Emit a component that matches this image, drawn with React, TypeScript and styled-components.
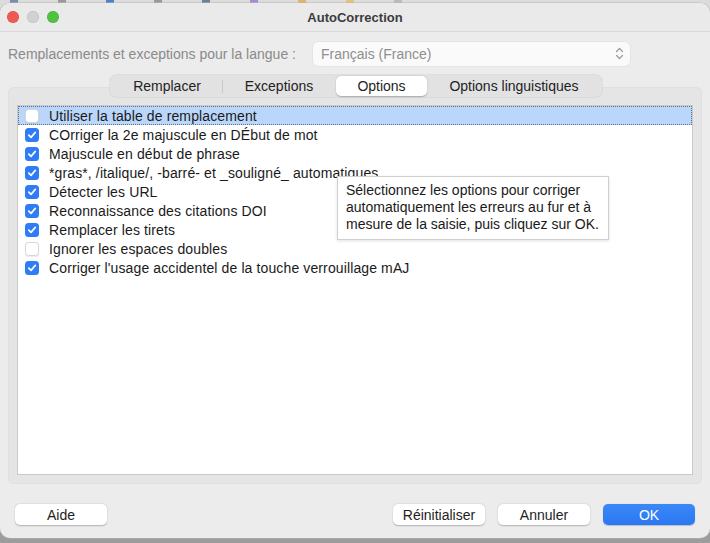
import React from "react";
import styled, { createGlobalStyle } from "styled-components";

const Global = createGlobalStyle`
  html, body { margin: 0; padding: 0; }
  body {
    width: 710px; height: 543px; overflow: hidden;
    background: #a9a9a9;
    font-family: "Liberation Sans", Arial, sans-serif;
  }
  #root { height: 543px; }
`;

const Desktop = styled.div`
  height: 543px;
  display: flex;
  flex-direction: column;
  background: linear-gradient(#dcdcdc 0, #dcdcdc 10px, #9c9c9c 10px);
`;

const BackStrip = styled.div`
  height: 3px;
  display: flex;
  gap: 40px;
  padding-left: 10px;
  align-items: flex-start;
`;

const StripIcon = styled.span<{ $c: string }>`
  width: 8px; height: 3px; background: ${(p) => p.$c};
`;

const Window = styled.div`
  position: relative;
  height: 535px;
  background: #ececec;
  border-radius: 10px;
  box-shadow: 0 0 0 0.5px #b5b5b5;
  display: flex;
  flex-direction: column;
  overflow: hidden;
`;

const TitleBar = styled.div`
  height: 28px;
  display: flex;
  align-items: center;
  border-bottom: 1px solid #d8d8d8;
  background: #eaeaea;
  padding: 0 7px;
`;

const Lights = styled.div`
  display: flex;
  gap: 8px;
`;

const Light = styled.span<{ $c: string }>`
  width: 12px; height: 12px; border-radius: 50%;
  background: ${(p) => p.$c};
  box-shadow: inset 0 0 0 0.5px rgba(0,0,0,0.12);
`;

const Title = styled.div`
  flex: 1;
  text-align: center;
  font-size: 13px;
  font-weight: bold;
  color: #3c3c3c;
  margin-right: 52px;
`;

const Body = styled.div`
  flex: 1;
  display: flex;
  flex-direction: column;
  padding: 9px 8px 0 8px;
`;

const LangRow = styled.div`
  display: flex;
  align-items: center;
  height: 25px;
`;

const LangLabel = styled.div`
  width: 305px;
  font-size: 14px;
  color: #8a8a8a;
`;

const Select = styled.div`
  width: 317px;
  height: 24px;
  background: #fafafa;
  border-radius: 5px;
  box-shadow: 0 0 0 0.5px #dcdcdc;
  display: flex;
  align-items: center;
  padding: 0 6px 0 8px;
  box-sizing: border-box;
  font-size: 14px;
  color: #8f8f8f;
  justify-content: space-between;
`;

const TabArea = styled.div`
  margin-top: 9px;
  display: flex;
  flex-direction: column;
  align-items: center;
`;

const Pane = styled.div`
  align-self: stretch;
  margin-top: -10px;
  height: 397px;
  background: #e5e5e5;
  border-radius: 6px;
  box-shadow: inset 0 0 0 0.5px #dadada;
  padding: 19px 10px 10px 10px;
  box-sizing: border-box;
  display: flex;
`;

const Tabs = styled.div`
  z-index: 1;
  display: flex;
  align-items: center;
  height: 22px;
  background: #e2e2e2;
  border-radius: 6px;
  box-shadow: 0 0 0 0.5px #d0d0d0;
  padding: 0 2px;
  margin-left: 2px;
`;

const Tab = styled.div<{ $w: number; $active?: boolean }>`
  width: ${(p) => p.$w}px;
  height: 20px;
  display: flex;
  align-items: center;
  justify-content: center;
  font-size: 14px;
  color: #1e1e1e;
  border-radius: 5px;
  background: ${(p) => (p.$active ? "#ffffff" : "transparent")};
  box-shadow: ${(p) => (p.$active ? "0 0.5px 1.5px rgba(0,0,0,0.25)" : "none")};
`;

const Sep = styled.span<{ $show: boolean }>`
  width: 1px; height: 13px;
  background: ${(p) => (p.$show ? "#c8c8c8" : "transparent")};
`;

const List = styled.div`
  flex: 1;
  background: #fff;
  box-shadow: 0 0 0 1px #c9c9c9;
  padding-top: 0;
  display: flex;
  flex-direction: column;
`;

const Row = styled.div<{ $sel?: boolean }>`
  height: 19px;
  display: flex;
  align-items: center;
  padding-left: 7px;
  gap: 10px;
  font-size: 14px;
  letter-spacing: 0.12px;
  color: #1a1a1a;
  background: ${(p) => (p.$sel ? "#bad7fb" : "transparent")};
  outline: ${(p) => (p.$sel ? "1px dotted #5b6f8a" : "none")};
  outline-offset: -1px;
  white-space: nowrap;
`;

const Box = styled.span<{ $on: boolean }>`
  width: 14px; height: 14px;
  border-radius: 3.5px;
  box-sizing: border-box;
  display: flex; align-items: center; justify-content: center;
  background: ${(p) => (p.$on ? "#2e7cf6" : "#ffffff")};
  border: ${(p) => (p.$on ? "none" : "0.5px solid #d6d6d6")};
  box-shadow: ${(p) => (p.$on ? "none" : "0 0.5px 1px rgba(0,0,0,0.08)")};
`;

const Tooltip = styled.div`
  position: absolute;
  left: 337px;
  top: 173px;
  width: 272px;
  box-sizing: border-box;
  padding: 5px 8px 6px 8px;
  background: #ffffff;
  border: 1px solid #cfcfcf;
  box-shadow: 0 1px 3px rgba(0,0,0,0.12);
  font-size: 14px;
  line-height: 17px;
  color: #1a1a1a;
`;

const Footer = styled.div`
  display: flex;
  align-items: center;
  padding: 20px 7px 0 7px;
  gap: 13px;
`;

const Btn = styled.div<{ $primary?: boolean }>`
  width: 92px;
  height: 21px;
  border-radius: 5px;
  display: flex;
  align-items: center;
  justify-content: center;
  font-size: 14px;
  color: ${(p) => (p.$primary ? "#ffffff" : "#1e1e1e")};
  background: ${(p) => (p.$primary ? "linear-gradient(#3b88f8, #2a77f3)" : "#ffffff")};
  box-shadow: ${(p) =>
    p.$primary ? "0 0.5px 1px rgba(0,0,0,0.2)" : "0 0.5px 1.5px rgba(0,0,0,0.25)"};
`;

const Spacer = styled.div`
  flex: 1;
`;

const Check = () => (
  <svg width="10" height="10" viewBox="0 0 10 10">
    <path d="M1.8 5.2 L4 7.4 L8.3 2.4" fill="none" stroke="#fff" strokeWidth="1.7" strokeLinecap="round" strokeLinejoin="round" />
  </svg>
);

const items: { t: string; on: boolean }[] = [
  { t: "Utiliser la table de remplacement", on: false },
  { t: "COrriger la 2e majuscule en DÉbut de mot", on: true },
  { t: "Majuscule en début de phrase", on: true },
  { t: "*gras*, /italique/, -barré- et _souligné_ automatiques", on: true },
  { t: "Détecter les URL", on: true },
  { t: "Reconnaissance des citations DOI", on: true },
  { t: "Remplacer les tirets", on: true },
  { t: "Ignorer les espaces doubles", on: false },
  { t: "Corriger l'usage accidentel de la touche verrouillage mAJ", on: true },
];

export default function App() {
  return (
    <>
      <Global />
      <Desktop>
        <BackStrip>
          <StripIcon $c="#7a8ea8" />
          <StripIcon $c="#9a9a9a" />
          <StripIcon $c="#4f7fcf" />
          <StripIcon $c="#9a9a9a" />
          <StripIcon $c="#6a7fa0" />
          <StripIcon $c="#a58bd0" />
          <StripIcon $c="#e0b46a" />
          <StripIcon $c="#e7c27a" />
          <StripIcon $c="#bbbbbb" />
        </BackStrip>
        <Window>
          <TitleBar>
            <Lights>
              <Light $c="#ee5a52" />
              <Light $c="#d1d1d1" />
              <Light $c="#4fc23f" />
            </Lights>
            <Title>AutoCorrection</Title>
          </TitleBar>
          <Body>
            <LangRow>
              <LangLabel>Remplacements et exceptions pour la langue :</LangLabel>
              <Select>
                <span>Français (France)</span>
                <svg width="9" height="13" viewBox="0 0 9 13">
                  <path d="M1.5 4.5 L4.5 1.5 L7.5 4.5 M1.5 8.5 L4.5 11.5 L7.5 8.5" fill="none" stroke="#9a9a9a" strokeWidth="1.2" strokeLinecap="round" strokeLinejoin="round" />
                </svg>
              </Select>
            </LangRow>
            <TabArea>
              <Tabs>
                <Tab $w={110}>Remplacer</Tab>
                <Sep $show />
                <Tab $w={112}>Exceptions</Tab>
                <Sep $show={false} />
                <Tab $w={91} $active>Options</Tab>
                <Sep $show={false} />
                <Tab $w={172}>Options linguistiques</Tab>
              </Tabs>
              <Pane>
                <List>
                  {items.map((it, i) => (
                    <Row key={i} $sel={i === 0}>
                      <Box $on={it.on}>{it.on && <Check />}</Box>
                      {it.t}
                    </Row>
                  ))}
                </List>
              </Pane>
            </TabArea>
            <Footer>
              <Btn>Aide</Btn>
              <Spacer />
              <Btn>Réinitialiser</Btn>
              <Btn>Annuler</Btn>
              <Btn $primary>OK</Btn>
            </Footer>
          </Body>
          <Tooltip>
            Sélectionnez les options pour corriger automatiquement les erreurs au fur et à mesure de la saisie, puis cliquez sur OK.
          </Tooltip>
        </Window>
      </Desktop>
    </>
  );
}
